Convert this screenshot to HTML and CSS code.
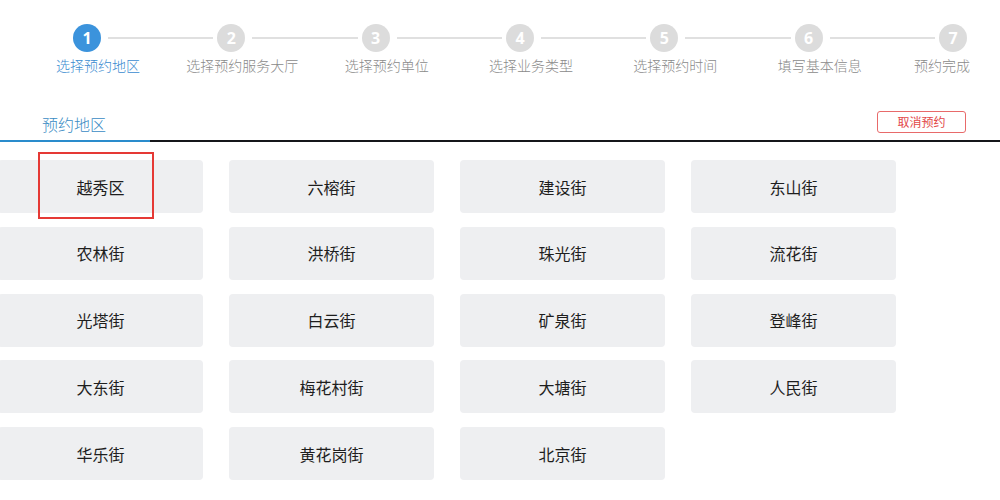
FILE: index.html
```html
<!DOCTYPE html>
<html lang="zh-CN">
<head>
<meta charset="utf-8">
<title>预约地区</title>
<link rel="stylesheet" href="styles.css">
</head>
<body>
<div class="steps">
  <div class="step active"><div class="head"><span class="num">1</span><span class="line"></span></div><div class="label">选择预约地区</div></div>
  <div class="step"><div class="head"><span class="num">2</span><span class="line"></span></div><div class="label">选择预约服务大厅</div></div>
  <div class="step"><div class="head"><span class="num">3</span><span class="line"></span></div><div class="label">选择预约单位</div></div>
  <div class="step"><div class="head"><span class="num">4</span><span class="line"></span></div><div class="label">选择业务类型</div></div>
  <div class="step"><div class="head"><span class="num">5</span><span class="line"></span></div><div class="label">选择预约时间</div></div>
  <div class="step"><div class="head"><span class="num">6</span><span class="line"></span></div><div class="label">填写基本信息</div></div>
  <div class="step last"><div class="head"><span class="num">7</span></div><div class="label">预约完成</div></div>
</div>

<div class="tabbar">
  <div class="tab">预约地区</div>
  <button class="cancel">取消预约</button>
</div>

<div class="grid">
  <div class="tile">越秀区<span class="highlight"></span></div>
  <div class="tile">六榕街</div>
  <div class="tile">建设街</div>
  <div class="tile">东山街</div>
  <div class="tile">农林街</div>
  <div class="tile">洪桥街</div>
  <div class="tile">珠光街</div>
  <div class="tile">流花街</div>
  <div class="tile">光塔街</div>
  <div class="tile">白云街</div>
  <div class="tile">矿泉街</div>
  <div class="tile">登峰街</div>
  <div class="tile">大东街</div>
  <div class="tile">梅花村街</div>
  <div class="tile">大塘街</div>
  <div class="tile">人民街</div>
  <div class="tile">华乐街</div>
  <div class="tile">黄花岗街</div>
  <div class="tile">北京街</div>
</div>
</body>
</html>
```

FILE: styles.css
```css
* { box-sizing: border-box; }
html, body { margin: 0; padding: 0; background: #fff; }
body {
  font-family: "Noto Sans CJK SC", "Noto Sans", sans-serif;
  color: #222;
  overflow: hidden;
  width: 1000px;
  height: 500px;
}

.steps {
  display: flex;
  padding: 24px 0 0 73px;
}
.step { width: 144.33px; flex: none; }
.step.last { width: 60px; }
.head { display: flex; align-items: center; height: 28px; }
.num {
  flex: none;
  width: 28px;
  height: 28px;
  border-radius: 50%;
  background: #dcdcdc;
  color: #fff;
  font-weight: 700;
  font-size: 16px;
  line-height: 28px;
  text-align: center;
  font-family: "Open Sans", "Noto Sans", sans-serif;
}
.line {
  flex: 1;
  height: 2px;
  background: #e0e0e0;
  margin: 0 4px 0 7px;
}
.label {
  width: 150px;
  margin: 3px 0 0 -50px;
  text-align: center;
  font-size: 14px;
  line-height: 20px;
  font-weight: 300;
  color: #8a8a8a;
}
.step.last .label { margin-left: -72px; }
.step.active .num { background: #3b93dc; }
.step.active .label { color: #3a8bd0; }

.tabbar {
  margin-top: 36px;
  display: flex;
  justify-content: space-between;
  align-items: flex-end;
  border-bottom: 2px solid #15171a;
}
.tab {
  width: 150px;
  padding: 0 0 5px 42px;
  font-size: 16px;
  line-height: 22px;
  font-weight: 300;
  color: #3a8cc4;
  border-bottom: 2px solid #2a8ccc;
  margin-bottom: -2px;
}
.cancel {
  width: 89px;
  height: 22px;
  margin: 0 34px 7px 0;
  padding: 0;
  border: 1px solid #e86a6a;
  border-radius: 3px;
  background: #fff;
  color: #e24848;
  font-family: inherit;
  font-size: 12px;
  line-height: 20px;
}

.grid {
  margin: 18px 0 0 -2px;
  display: grid;
  grid-template-columns: repeat(4, 205px);
  grid-auto-rows: 53px;
  column-gap: 26px;
  row-gap: 13.75px;
}
.tile {
  position: relative;
  background: #eeeff1;
  border-radius: 4px;
  display: flex;
  align-items: center;
  justify-content: center;
  font-size: 16px;
  color: #1e1e1e;
}
.highlight {
  position: absolute;
  left: 40px;
  top: -8px;
  width: 116px;
  height: 67px;
  border: 2px solid #e53935;
}
```
